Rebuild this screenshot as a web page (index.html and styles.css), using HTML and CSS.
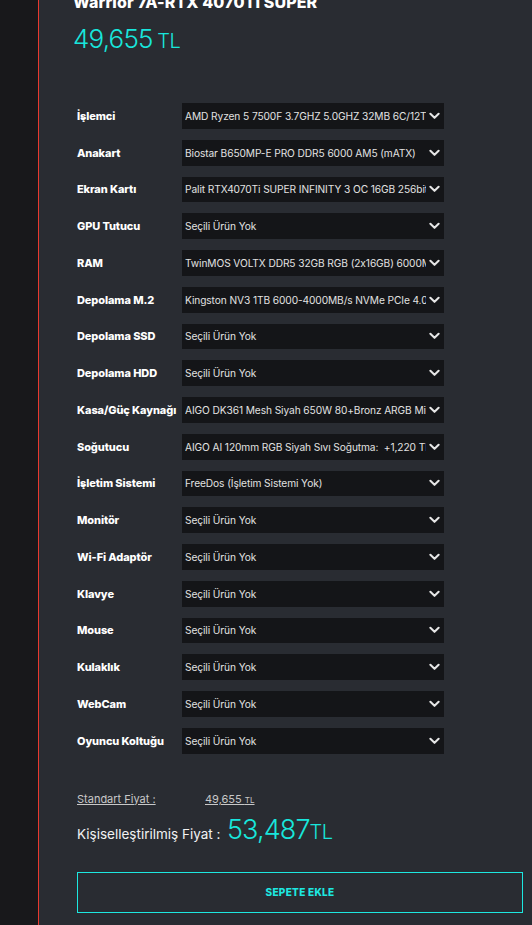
FILE: index.html
```html
<!DOCTYPE html>
<html lang="tr">
<head>
<meta charset="utf-8">
<link rel="stylesheet" href="styles.css">
</head>
<body>
<div class="page">
  <aside class="side"></aside>
  <main class="main">
    <h1 class="title">Warrior 7A-RTX 4070Ti SUPER</h1>
    <div class="price"><span class="num">49,655</span> <span class="cur">TL</span></div>

    <div class="rows">
      <div class="row"><span class="lbl">İşlemci</span><div class="sel"><span class="val">AMD Ryzen 5 7500F 3.7GHZ 5.0GHZ 32MB 6C/12T</span><svg class="chev" viewBox="0 0 12 8"><path d="M1.5 1.5 6 6l4.5-4.5"/></svg></div></div>
      <div class="row"><span class="lbl">Anakart</span><div class="sel"><span class="val">Biostar B650MP-E PRO DDR5 6000 AM5 (mATX)</span><svg class="chev" viewBox="0 0 12 8"><path d="M1.5 1.5 6 6l4.5-4.5"/></svg></div></div>
      <div class="row"><span class="lbl">Ekran Kartı</span><div class="sel"><span class="val">Palit RTX4070Ti SUPER INFINITY 3 OC 16GB 256bit</span><svg class="chev" viewBox="0 0 12 8"><path d="M1.5 1.5 6 6l4.5-4.5"/></svg></div></div>
      <div class="row"><span class="lbl">GPU Tutucu</span><div class="sel"><span class="val">Seçili Ürün Yok</span><svg class="chev" viewBox="0 0 12 8"><path d="M1.5 1.5 6 6l4.5-4.5"/></svg></div></div>
      <div class="row"><span class="lbl">RAM</span><div class="sel"><span class="val">TwinMOS VOLTX DDR5 32GB RGB (2x16GB) 6000MHz</span><svg class="chev" viewBox="0 0 12 8"><path d="M1.5 1.5 6 6l4.5-4.5"/></svg></div></div>
      <div class="row"><span class="lbl">Depolama M.2</span><div class="sel"><span class="val">Kingston NV3 1TB 6000-4000MB/s NVMe PCIe 4.0</span><svg class="chev" viewBox="0 0 12 8"><path d="M1.5 1.5 6 6l4.5-4.5"/></svg></div></div>
      <div class="row"><span class="lbl">Depolama SSD</span><div class="sel"><span class="val">Seçili Ürün Yok</span><svg class="chev" viewBox="0 0 12 8"><path d="M1.5 1.5 6 6l4.5-4.5"/></svg></div></div>
      <div class="row"><span class="lbl">Depolama HDD</span><div class="sel"><span class="val">Seçili Ürün Yok</span><svg class="chev" viewBox="0 0 12 8"><path d="M1.5 1.5 6 6l4.5-4.5"/></svg></div></div>
      <div class="row"><span class="lbl">Kasa/Güç Kaynağı</span><div class="sel"><span class="val">AIGO DK361 Mesh Siyah 650W 80+Bronz ARGB Mid Tower</span><svg class="chev" viewBox="0 0 12 8"><path d="M1.5 1.5 6 6l4.5-4.5"/></svg></div></div>
      <div class="row"><span class="lbl">Soğutucu</span><div class="sel"><span class="val">AIGO AI 120mm RGB Siyah Sıvı Soğutma:&nbsp; +1,220 TL</span><svg class="chev" viewBox="0 0 12 8"><path d="M1.5 1.5 6 6l4.5-4.5"/></svg></div></div>
      <div class="row"><span class="lbl">İşletim Sistemi</span><div class="sel"><span class="val">FreeDos (İşletim Sistemi Yok)</span><svg class="chev" viewBox="0 0 12 8"><path d="M1.5 1.5 6 6l4.5-4.5"/></svg></div></div>
      <div class="row"><span class="lbl">Monitör</span><div class="sel"><span class="val">Seçili Ürün Yok</span><svg class="chev" viewBox="0 0 12 8"><path d="M1.5 1.5 6 6l4.5-4.5"/></svg></div></div>
      <div class="row"><span class="lbl">Wi-Fi Adaptör</span><div class="sel"><span class="val">Seçili Ürün Yok</span><svg class="chev" viewBox="0 0 12 8"><path d="M1.5 1.5 6 6l4.5-4.5"/></svg></div></div>
      <div class="row"><span class="lbl">Klavye</span><div class="sel"><span class="val">Seçili Ürün Yok</span><svg class="chev" viewBox="0 0 12 8"><path d="M1.5 1.5 6 6l4.5-4.5"/></svg></div></div>
      <div class="row"><span class="lbl">Mouse</span><div class="sel"><span class="val">Seçili Ürün Yok</span><svg class="chev" viewBox="0 0 12 8"><path d="M1.5 1.5 6 6l4.5-4.5"/></svg></div></div>
      <div class="row"><span class="lbl">Kulaklık</span><div class="sel"><span class="val">Seçili Ürün Yok</span><svg class="chev" viewBox="0 0 12 8"><path d="M1.5 1.5 6 6l4.5-4.5"/></svg></div></div>
      <div class="row"><span class="lbl">WebCam</span><div class="sel"><span class="val">Seçili Ürün Yok</span><svg class="chev" viewBox="0 0 12 8"><path d="M1.5 1.5 6 6l4.5-4.5"/></svg></div></div>
      <div class="row"><span class="lbl">Oyuncu Koltuğu</span><div class="sel"><span class="val">Seçili Ürün Yok</span><svg class="chev" viewBox="0 0 12 8"><path d="M1.5 1.5 6 6l4.5-4.5"/></svg></div></div>
    </div>

    <div class="std">
      <a class="std-lbl">Standart Fiyat :</a>
      <a class="std-val">49,655 <span class="small">TL</span></a>
    </div>
    <div class="custom">
      <span class="custom-lbl">Kişiselleştirilmiş Fiyat :</span>
      <span class="custom-val"><span class="num">53,487</span><span class="cur">TL</span></span>
    </div>
    <button class="cart">SEPETE EKLE</button>
  </main>
</div>
</body>
</html>
```

FILE: styles.css
```css
* { box-sizing: border-box; }
html, body { margin: 0; padding: 0; }
body {
  background: #292c32;
  font-family: Inter, "Noto Sans", "Liberation Sans", sans-serif;
  font-feature-settings: "calt" 0;
  color: #fff;
  height: 925px;
  overflow: hidden;
}
.page { display: flex; height: 925px; }
.side { width: 38px; flex: none; background: #18181b; }
.main {
  flex: 1;
  border-left: 1px solid #e8392f;
  padding-left: 34px;
  background: #292c32;
}
.title {
  margin: -8px 0 0 0;
  font-size: 16px;
  line-height: 20px;
  font-weight: 800;
  color: #fff;
  letter-spacing: 0.1px;
}
.price {
  margin-top: 11px;
  color: #18e6dc;
  line-height: 32px;
  height: 32px;
}
.price .num { font-size: 26px; font-weight: 300; letter-spacing: -0.8px; }
.price .cur { font-size: 20px; font-weight: 300; letter-spacing: -0.5px; }

.rows {
  margin-top: 48px;
  padding-left: 4px;
  display: flex;
  flex-direction: column;
  gap: 11px;
}
.row { display: flex; align-items: center; height: 25.76px; }
.lbl {
  width: 105px;
  flex: none;
  font-size: 11px;
  font-weight: 800;
  color: #fff;
  white-space: nowrap;
  letter-spacing: -0.1px;
}
.sel {
  width: 262px;
  height: 25.76px;
  background: #141518;
  display: flex;
  align-items: center;
  padding: 0 4px 0 3px;
}
.val {
  flex: 1;
  overflow: hidden;
  white-space: nowrap;
  font-size: 10.2px;
  letter-spacing: -0.1px;
  color: #e2e2e2;
}
.chev {
  width: 11px;
  height: 8px;
  flex: none;
  margin-left: 3px;
  fill: none;
  stroke: #e6e6e6;
  stroke-width: 2.2;
  stroke-linecap: round;
  stroke-linejoin: round;
}

.std {
  margin-top: 38px;
  padding-left: 4px;
  display: flex;
  align-items: baseline;
  font-size: 11px;
  color: #c8c8c8;
  height: 16px;
}
.std a { text-decoration: underline; color: #c8c8c8; }
.std-lbl { width: 128px; }
.std .small { font-size: 8px; }

.custom {
  margin-top: 5px;
  padding-left: 4px;
  display: flex;
  align-items: baseline;
  height: 34px;
}
.custom-lbl { font-size: 13.5px; color: #f2f2f2; width: 150px; }
.custom-val { color: #18e6dc; }
.custom-val .num { font-size: 27px; font-weight: 300; letter-spacing: -0.9px; }
.custom-val .cur { font-size: 20px; font-weight: 300; letter-spacing: -0.5px; }

.cart {
  display: block;
  margin-top: 25px;
  margin-left: 4px;
  width: 446px;
  height: 41px;
  background: transparent;
  border: 1px solid #1de8e0;
  color: #1de8e0;
  font-family: inherit;
  font-weight: 800;
  font-size: 10px;
  letter-spacing: 0.3px;
}
```
